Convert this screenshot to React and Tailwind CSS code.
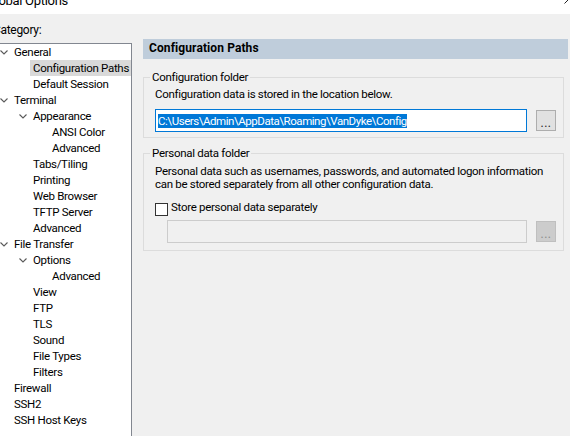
const tree = [
  { label: 'General', level: 0, open: true },
  { label: 'Configuration Paths', level: 1, selected: true },
  { label: 'Default Session', level: 1 },
  { label: 'Terminal', level: 0, open: true },
  { label: 'Appearance', level: 1, open: true },
  { label: 'ANSI Color', level: 2 },
  { label: 'Advanced', level: 2 },
  { label: 'Tabs/Tiling', level: 1 },
  { label: 'Printing', level: 1 },
  { label: 'Web Browser', level: 1 },
  { label: 'TFTP Server', level: 1 },
  { label: 'Advanced', level: 1 },
  { label: 'File Transfer', level: 0, open: true },
  { label: 'Options', level: 1, open: true },
  { label: 'Advanced', level: 2 },
  { label: 'View', level: 1 },
  { label: 'FTP', level: 1 },
  { label: 'TLS', level: 1 },
  { label: 'Sound', level: 1 },
  { label: 'File Types', level: 1 },
  { label: 'Filters', level: 1 },
  { label: 'Firewall', level: 0 },
  { label: 'SSH2', level: 0 },
  { label: 'SSH Host Keys', level: 0 },
];

const indent = {
  0: 'pl-[9px]',
  1: 'pl-[28px]',
  2: 'pl-[47px]',
};

function Chevron() {
  return (
    <svg width="8" height="5" viewBox="0 0 8 5" className="block">
      <polyline points="0.5,0.5 4,4 7.5,0.5" fill="none" stroke="#5a5a5a" strokeWidth="1.1" />
    </svg>
  );
}

function TreeRow({ item }) {
  return (
    <div className={`flex h-[16px] items-center ${indent[item.level]}`}>
      <div className="w-[11px] shrink-0 flex items-center">{item.open ? <Chevron /> : null}</div>
      <div
        className={`flex-1 h-[16px] pl-[3px] pt-[1px] leading-[15px] whitespace-nowrap ${
          item.selected ? 'bg-[#d9d9d9]' : ''
        }`}
      >
        {item.label}
      </div>
    </div>
  );
}

function DotsButton({ disabled }) {
  return (
    <div
      className={`mt-[1px] ml-[9px] w-[20px] h-[21px] border flex items-end justify-center pb-[2px] leading-[10px] text-[12px] tracking-[0.5px] ${
        disabled ? 'bg-[#cccccc] border-[#bfbfbf] text-[#8a8a8a]' : 'bg-[#e1e1e1] border-[#adadad] text-[#222]'
      }`}
    >
      ...
    </div>
  );
}

export default function App() {
  return (
    <div className="w-[570px] h-[436px] overflow-hidden bg-[#f0f0f0] text-[11.5px] text-black tracking-[-0.3px] font-['Roboto',sans-serif]">
      <div className="h-[14px] bg-white flex overflow-hidden">
        <span className="ml-[-13px] mt-[-7px] leading-[16px] text-[13px] whitespace-nowrap">Global Options</span>
        <svg width="10" height="10" viewBox="0 0 10 10" className="ml-auto mr-[-4px] mt-[-6px] shrink-0">
          <path d="M0.5 0.5 L9.5 9.5 M9.5 0.5 L0.5 9.5" stroke="#222" strokeWidth="1" />
        </svg>
      </div>
      <div className="flex">
        <div className="w-[142px] ml-[-10px] shrink-0">
          <div className="mt-[8px] ml-[3px] leading-[16px] h-[16px] text-[12px]">Category:</div>
          <div className="mt-[5px] h-[400px] border border-[#828790] bg-white overflow-hidden">
            {tree.map((item, i) => (
              <TreeRow key={i} item={item} />
            ))}
          </div>
        </div>
        <div className="ml-[11px] w-[425px] shrink-0">
          <div className="mt-[25px] h-[20px] bg-[#bfcddb] pl-[6px] font-bold leading-[19px] text-[12px] tracking-[0.1px]">
            Configuration Paths
          </div>
          <fieldset className="mt-[10px] w-[421px] border border-[#dcdcdc] p-0 m-0 min-w-0">
            <legend className="ml-[6px] px-[2px] leading-[16px]">Configuration folder</legend>
            <div className="pl-[11px] pt-[1px] pb-[5px]">
              <div className="leading-[16px]">Configuration data is stored in the location below.</div>
              <div className="mt-[7px] flex items-start">
                <div className="w-[372px] h-[23px] border border-[#0078d7] bg-white flex items-center pl-[2px]">
                  <span className="bg-[#0078d7] text-white leading-[14px] h-[14px] whitespace-nowrap tracking-[-0.45px]">
                    C:\Users\Admin\AppData\Roaming\VanDyke\Config
                  </span>
                </div>
                <DotsButton />
              </div>
            </div>
          </fieldset>
          <fieldset className="mt-[7px] w-[421px] border border-[#dcdcdc] p-0 m-0 min-w-0">
            <legend className="ml-[6px] px-[2px] leading-[16px]">Personal data folder</legend>
            <div className="pl-[11px] pt-[4px] pb-[7px]">
              <div className="leading-[13px]">
                Personal data such as usernames, passwords, and automated logon information
                <br />
                can be stored separately from all other configuration data.
              </div>
              <div className="mt-[8px] flex items-start h-[16px]">
                <div className="mt-[4px] w-[13px] h-[13px] border border-[#333333] bg-white shrink-0" />
                <span className="ml-[3px] leading-[16px]">Store personal data separately</span>
              </div>
              <div className="mt-[5px] ml-[12px] flex items-start">
                <div className="w-[360px] h-[23px] border border-[#cccccc] bg-[#f0f0f0]" />
                <DotsButton disabled />
              </div>
            </div>
          </fieldset>
        </div>
      </div>
    </div>
  );
}
